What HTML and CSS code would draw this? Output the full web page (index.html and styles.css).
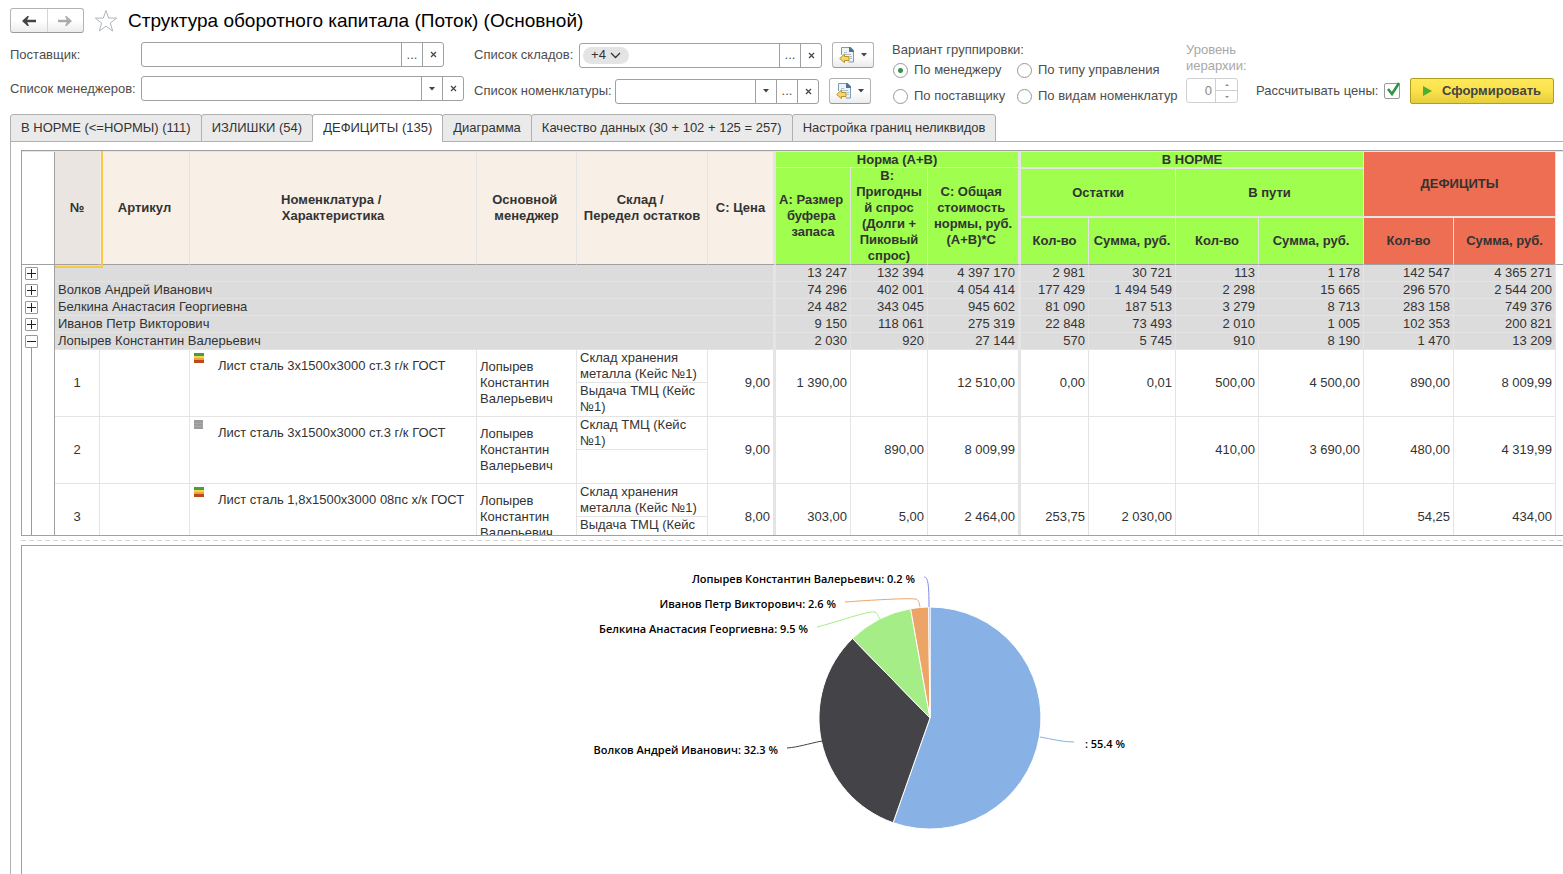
FILE: index.html
```html
<!DOCTYPE html>
<html lang="ru">
<head>
<meta charset="utf-8">
<title>Структура оборотного капитала</title>
<link rel="stylesheet" href="styles.css">
</head>
<body>
<svg class="sprite" aria-hidden="true">
  <symbol id="icon-load" viewBox="0 0 16 16">
    <path d="M3 1h8l3 3v11h-11z" fill="#eef3f8"/>
    <path d="M2.500 8V.5h8.500l3.500 3.500v11h-5" fill="none" stroke="#7f9ab5"/>
    <path d="M10 0h1.500l3.500 3.500v1.500h-5z" fill="#4f7296"/>
    <path d="M5 5.500h3M5 7.500h7M11 9.500h2M11 11.500h2" stroke="#a9bed2"/>
    <path d="M.7 11.500l4.800-4.500v2.500h4.500v4h-4.500v2.200z" fill="#f5d76a" stroke="#b8912b"/>
  </symbol>
  <symbol id="icon-cross" viewBox="0 0 7 7">
    <path d="M1 1l5 5M6 1l-5 5" stroke="#444" stroke-width="1.200"/>
  </symbol>
  <symbol id="icon-drop" viewBox="0 0 6 4">
    <path d="M0 0h6l-3 3.500z" fill="#444"/>
  </symbol>
  <symbol id="icon-plus" viewBox="0 0 11 11">
    <path d="M1 5.500h9M5.500 1v9" stroke="#222"/>
  </symbol>
  <symbol id="icon-minus" viewBox="0 0 11 11">
    <path d="M1 5.500h9" stroke="#222"/>
  </symbol>
  <symbol id="icon-stock" viewBox="0 0 12 12">
    <path d="M1 1h10v3h-10z" fill="#4e9a3d"/>
    <path d="M1 4h10v2h-10z" fill="#e8d94f"/>
    <path d="M1 6h10v2h-10z" fill="#f0a23c"/>
    <path d="M1 8h10v3h-10z" fill="#bb4a1c"/>
  </symbol>
  <symbol id="icon-none" viewBox="0 0 12 12">
    <path d="M1 1h9v9h-9z" fill="#9c9c9c"/>
    <path d="M1 4.500h9M1 7.500h9" stroke="#a9a9a9"/>
  </symbol>
</svg>

<header class="titlebar">
  <div class="history">
    <button type="button" aria-label="Назад"><svg width="14" height="10" viewBox="0 0 14 10"><path d="M0 5L5.500 0H7L5.200 3.700H14V6.300H5.200L7 10H5.500z" fill="#444"/></svg></button>
    <button type="button" aria-label="Вперед"><svg width="14" height="10" viewBox="0 0 14 10"><path d="M14 5L8.500 0H7L8.800 3.700H0V6.300H8.800L7 10H8.500z" fill="#ababab"/></svg></button>
  </div>
  <button class="star" type="button" aria-label="В избранное"><svg width="24" height="24" viewBox="0 0 24 24"><path d="M12 1.500l2.700 7.600h8l-6.400 4.900 2.400 8-6.700-4.800-6.700 4.800 2.400-8L1.300 9.100h8z" fill="#fff" stroke="#b0b4b9"/></svg></button>
  <h1>Структура оборотного капитала (Поток) (Основной)</h1>
</header>

<form class="filters" onsubmit="return false">
  <div class="filter-col col-left">
    <div class="row">
      <label class="cap-main" for="supplier">Поставщик:</label>
      <div class="field w-supplier">
        <input id="supplier" type="text">
        <button type="button" aria-label="Выбрать">...</button>
        <button type="button" aria-label="Очистить"><svg width="7" height="7"><use href="#icon-cross"/></svg></button>
      </div>
    </div>
    <div class="row">
      <label class="cap-main" for="managers">Список менеджеров:</label>
      <div class="field w-managers">
        <input id="managers" type="text">
        <button type="button" aria-label="Открыть список"><svg width="6" height="4"><use href="#icon-drop"/></svg></button>
        <button type="button" aria-label="Очистить"><svg width="7" height="7"><use href="#icon-cross"/></svg></button>
      </div>
    </div>
  </div>

  <div class="filter-col col-lists">
    <div class="row">
      <label class="cap-stores" for="stores">Список складов:</label>
      <div class="field w-stores">
        <button class="pill" type="button">+4 <svg width="11" height="7" viewBox="0 0 11 7"><path d="M1 1l4.500 4.500L10 1" fill="none" stroke="#333" stroke-width="1.300"/></svg></button>
        <input id="stores" type="text">
        <button type="button" aria-label="Выбрать">...</button>
        <button type="button" aria-label="Очистить"><svg width="7" height="7"><use href="#icon-cross"/></svg></button>
      </div>
      <button class="load" type="button" aria-label="Загрузить склады"><svg width="16" height="16"><use href="#icon-load"/></svg><svg width="6" height="4"><use href="#icon-drop"/></svg></button>
    </div>
    <div class="row">
      <label class="cap-items" for="items">Список номенклатуры:</label>
      <div class="field w-items">
        <input id="items" type="text">
        <button type="button" aria-label="Открыть список"><svg width="6" height="4"><use href="#icon-drop"/></svg></button>
        <button type="button" aria-label="Выбрать">...</button>
        <button type="button" aria-label="Очистить"><svg width="7" height="7"><use href="#icon-cross"/></svg></button>
      </div>
      <button class="load" type="button" aria-label="Загрузить номенклатуру"><svg width="16" height="16"><use href="#icon-load"/></svg><svg width="6" height="4"><use href="#icon-drop"/></svg></button>
    </div>
  </div>

  <div class="grouping" role="radiogroup" aria-labelledby="grouping-title">
    <div id="grouping-title" class="grouping-title">Вариант группировки:</div>
    <label><input type="radio" name="grouping" checked>По менеджеру</label>
    <label><input type="radio" name="grouping">По типу управления</label>
    <label><input type="radio" name="grouping">По поставщику</label>
    <label><input type="radio" name="grouping">По видам номенклатур</label>
  </div>

  <div class="level">
    <label for="level">Уровень иерархии:</label>
    <div class="spinner">
      <input id="level" type="text" value="0" disabled>
      <div class="steps">
        <button type="button" disabled aria-label="Больше"><svg width="4" height="2" viewBox="0 0 4 2"><path d="M0 2l2-2 2 2z" fill="#888"/></svg></button>
        <button type="button" disabled aria-label="Меньше"><svg width="4" height="2" viewBox="0 0 4 2"><path d="M0 0l2 2 2-2z" fill="#888"/></svg></button>
      </div>
    </div>
  </div>

  <div class="run">
    <label for="prices">Рассчитывать цены:</label>
    <span class="check">
      <input id="prices" type="checkbox" checked>
      <svg width="16" height="16" viewBox="0 0 16 16"><path d="M3 7l4 5 7-11" fill="none" stroke="#2f9446" stroke-width="2.600"/></svg>
    </span>
    <button class="primary" type="submit"><svg width="9" height="10" viewBox="0 0 9 10"><path d="M0 0l9 5-9 5z" fill="#4caf32"/></svg>Сформировать</button>
  </div>
</form>

<nav class="tabs" role="tablist">
  <button type="button" role="tab">В НОРМЕ (&lt;=НОРМЫ) (111)</button>
  <button type="button" role="tab">ИЗЛИШКИ (54)</button>
  <button type="button" role="tab" aria-selected="true">ДЕФИЦИТЫ (135)</button>
  <button type="button" role="tab">Диаграмма</button>
  <button type="button" role="tab">Качество данных (30 + 102 + 125 = 257)</button>
  <button type="button" role="tab">Настройка границ неликвидов</button>
</nav>

<main class="panel">
  <section class="sheet">
    <table>
      <colgroup>
        <col class="c-tree"><col class="c-num"><col class="c-art"><col class="c-name"><col class="c-man"><col class="c-store"><col class="c-price">
        <col class="c-a"><col class="c-b"><col class="c-c"><col class="c-q1"><col class="c-s1"><col class="c-q2"><col class="c-s2"><col class="c-q3"><col class="c-s3"><col>
      </colgroup>
      <thead>
        <tr class="h-top">
          <td class="tree" rowspan="3"></td>
          <th class="end selected" rowspan="3">№</th>
          <th class="end" rowspan="3">Артикул</th>
          <th class="end" rowspan="3">Номенклатура /&nbsp;<br>Характеристика</th>
          <th class="end" rowspan="3">Основной&nbsp;<br>менеджер</th>
          <th class="end" rowspan="3">Склад /&nbsp;<br>Передел остатков</th>
          <th class="end thick" rowspan="3">С: Цена</th>
          <th class="green thick band" colspan="3">Норма (A+B)</th>
          <th class="green band" colspan="4">В НОРМЕ</th>
          <th class="red" colspan="2" rowspan="2">ДЕФИЦИТЫ</th>
          <td class="end filler" rowspan="3"></td>
        </tr>
        <tr class="h-mid">
          <th class="green end" rowspan="2">А: Размер&nbsp;<br>буфера&nbsp;<br>запаса</th>
          <th class="green end" rowspan="2">В:&nbsp;<br>Пригодны<br>й спрос<br>(Долги +<br>Пиковый<br>спрос)</th>
          <th class="green end thick" rowspan="2">С: Общая&nbsp;<br>стоимость&nbsp;<br>нормы, руб.<br>(А+В)*С&nbsp;</th>
          <th class="green sub" colspan="2">Остатки</th>
          <th class="green sub" colspan="2">В пути</th>
        </tr>
        <tr class="h-low">
          <th class="green end sub">Кол-во</th>
          <th class="green end sub">Сумма, руб.</th>
          <th class="green end sub">Кол-во</th>
          <th class="green end sub">Сумма, руб.</th>
          <th class="red end sub">Кол-во</th>
          <th class="red end sub">Сумма, руб.</th>
        </tr>
      </thead>
      <tbody>
        <tr class="group"><td class="tree"><button type="button" aria-label="Развернуть"><svg width="11" height="11"><use href="#icon-plus"/></svg></button></td><td class="who thick" colspan="6"></td><td>13 247</td><td>132 394</td><td class="thick">4 397 170</td><td>2 981</td><td>30 721</td><td>113</td><td>1 178</td><td>142 547</td><td>4 365 271</td><td class="filler"></td></tr>
        <tr class="group"><td class="tree"><button type="button" aria-label="Развернуть"><svg width="11" height="11"><use href="#icon-plus"/></svg></button></td><td class="who thick" colspan="6">Волков Андрей Иванович</td><td>74 296</td><td>402 001</td><td class="thick">4 054 414</td><td>177 429</td><td>1 494 549</td><td>2 298</td><td>15 665</td><td>296 570</td><td>2 544 200</td><td class="filler"></td></tr>
        <tr class="group"><td class="tree"><button type="button" aria-label="Развернуть"><svg width="11" height="11"><use href="#icon-plus"/></svg></button></td><td class="who thick" colspan="6">Белкина Анастасия Георгиевна</td><td>24 482</td><td>343 045</td><td class="thick">945 602</td><td>81 090</td><td>187 513</td><td>3 279</td><td>8 713</td><td>283 158</td><td>749 376</td><td class="filler"></td></tr>
        <tr class="group"><td class="tree"><button type="button" aria-label="Развернуть"><svg width="11" height="11"><use href="#icon-plus"/></svg></button></td><td class="who thick" colspan="6">Иванов Петр Викторович</td><td>9 150</td><td>118 061</td><td class="thick">275 319</td><td>22 848</td><td>73 493</td><td>2 010</td><td>1 005</td><td>102 353</td><td>200 821</td><td class="filler"></td></tr>
        <tr class="group"><td class="tree branch-start"><button type="button" aria-label="Свернуть"><svg width="11" height="11"><use href="#icon-minus"/></svg></button></td><td class="who thick" colspan="6">Лопырев Константин Валерьевич</td><td>2 030</td><td>920</td><td class="thick">27 144</td><td>570</td><td>5 745</td><td>910</td><td>8 190</td><td>1 470</td><td>13 209</td><td class="filler"></td></tr>

        <tr class="item">
          <td class="tree branch" rowspan="2"></td>
          <td class="num" rowspan="2">1</td><td rowspan="2"></td>
          <td class="name" rowspan="2"><div><svg width="12" height="12"><use href="#icon-stock"/></svg><span>Лист сталь 3х1500х3000 ст.3 г/к ГОСТ</span></div></td>
          <td class="text" rowspan="2">Лопырев Константин Валерьевич</td>
          <td class="store">Склад хранения металла (Кейс №1)</td>
          <td class="thick" rowspan="2">9,00</td><td rowspan="2">1 390,00</td><td rowspan="2"></td><td class="thick" rowspan="2">12 510,00</td><td rowspan="2">0,00</td><td rowspan="2">0,01</td><td rowspan="2">500,00</td><td rowspan="2">4 500,00</td><td rowspan="2">890,00</td><td rowspan="2">8 009,99</td><td class="filler" rowspan="2"></td>
        </tr>
        <tr class="item-low"><td class="store">Выдача ТМЦ (Кейс №1)</td></tr>
        <tr class="item">
          <td class="tree branch" rowspan="2"></td>
          <td class="num" rowspan="2">2</td><td rowspan="2"></td>
          <td class="name" rowspan="2"><div><svg width="12" height="12"><use href="#icon-none"/></svg><span>Лист сталь 3х1500х3000 ст.3 г/к ГОСТ</span></div></td>
          <td class="text" rowspan="2">Лопырев Константин Валерьевич</td>
          <td class="store">Склад ТМЦ (Кейс №1)</td>
          <td class="thick" rowspan="2">9,00</td><td rowspan="2"></td><td rowspan="2">890,00</td><td class="thick" rowspan="2">8 009,99</td><td rowspan="2"></td><td rowspan="2"></td><td rowspan="2">410,00</td><td rowspan="2">3 690,00</td><td rowspan="2">480,00</td><td rowspan="2">4 319,99</td><td class="filler" rowspan="2"></td>
        </tr>
        <tr class="item-low"><td class="store"></td></tr>
        <tr class="item">
          <td class="tree branch" rowspan="2"></td>
          <td class="num" rowspan="2">3</td><td rowspan="2"></td>
          <td class="name" rowspan="2"><div><svg width="12" height="12"><use href="#icon-stock"/></svg><span>Лист сталь 1,8х1500х3000 08пс х/к ГОСТ</span></div></td>
          <td class="text" rowspan="2">Лопырев Константин Валерьевич</td>
          <td class="store">Склад хранения металла (Кейс №1)</td>
          <td class="thick" rowspan="2">8,00</td><td rowspan="2">303,00</td><td rowspan="2">5,00</td><td class="thick" rowspan="2">2 464,00</td><td rowspan="2">253,75</td><td rowspan="2">2 030,00</td><td rowspan="2"></td><td rowspan="2"></td><td rowspan="2">54,25</td><td rowspan="2">434,00</td><td class="filler" rowspan="2"></td>
        </tr>
        <tr class="item-low"><td class="store">Выдача ТМЦ (Кейс</td></tr>
      </tbody>
    </table>
  </section>
  <div class="splitter"></div>
  <section class="chart">
    <svg viewBox="0 0 1541 328" role="img" aria-label="Доли менеджеров">
      <g stroke="#fff" stroke-linejoin="round">
        <path d="M908 172V61A111 111 0 1 1 871.100 276.700z" fill="#88b2e6"/>
        <path d="M908 172L871.100 276.700A111 111 0 0 1 830.500 92.500z" fill="#434348"/>
        <path d="M908 172L830.500 92.500A111 111 0 0 1 888.600 62.700z" fill="#a5ed86"/>
        <path d="M908 172L888.600 62.700A111 111 0 0 1 906.600 61z" fill="#eda567"/>
        <path d="M908 172L906.600 61A111 111 0 0 1 908 61z" fill="#8085e9"/>
      </g>
      <g fill="none">
        <path d="M902 31C906 31 907 38 907 61" stroke="#8085e9"/>
        <path d="M823 56C850 54 885 52 893 53C897 53 897 57 898 61" stroke="#eda567"/>
        <path d="M795 81C815 76 845 65 852 66C855 66 856 70 858 73" stroke="#a5ed86"/>
        <path d="M765 202C777 201 785 198 800 195" stroke="#434348"/>
        <path d="M1018 191C1030 193 1040 196 1052 196" stroke="#88b2e6"/>
      </g>
      <g class="labels">
        <text x="893" y="37">Лопырев Константин Валерьевич: 0.2 %</text>
        <text x="814" y="62">Иванов Петр Викторович: 2.6 %</text>
        <text x="786" y="87">Белкина Анастасия Георгиевна: 9.5 %</text>
        <text x="756" y="208">Волков Андрей Иванович: 32.3 %</text>
        <text x="1103" y="202">: 55.4 %</text>
      </g>
    </svg>
  </section>
</main>
</body>
</html>
```
FILE: styles.css
```css
* { box-sizing: border-box; }

body {
  margin: 0;
  height: 100vh;
  display: flex;
  flex-direction: column;
  overflow: hidden;
  background: #fff;
  color: #333;
  font: 13px/16px "Liberation Sans", Arial, sans-serif;
}

button, input {
  font: inherit;
  color: inherit;
  margin: 0;
  padding: 0;
  border: 0;
  background: none;
  outline: 0;
}

.sprite { display: none; }

/* Title */
.titlebar {
  display: flex;
  align-items: center;
  gap: 10px;
  padding: 8px 10px 0;
  height: 33px;
}

.history {
  display: flex;
  width: 74px;
  height: 25px;
  border: 1px solid #b3b3b3;
  border-bottom-color: #999;
  border-radius: 3px;
  background: linear-gradient(#fff 50%, #ececec);
}

.history button {
  flex: 1;
  display: flex;
  align-items: center;
  justify-content: center;
}

.history button + button { border-left: 1px solid #d4d4d4; }

.star { width: 24px; height: 24px; }

.star svg, .load svg, .field svg, .history svg { display: block; }

h1 {
  margin: 0;
  font-size: 19px;
  line-height: 24px;
  font-weight: 400;
  color: #000;
}

/* Filters */
.filters {
  display: grid;
  grid-template-columns: 454px 408px 284px 60px auto;
  justify-content: start;
  gap: 10px;
  padding: 9px 9px 10px 10px;
  color: #4d4d4d;
}

.filter-col { display: flex; flex-direction: column; }
.col-left { gap: 9px; }
.col-lists { gap: 10px; }

.row { display: flex; align-items: center; }
.cap-main { width: 131px; white-space: nowrap; }
.cap-stores { width: 105px; white-space: nowrap; }
.cap-items { width: 141px; white-space: nowrap; }

.field {
  display: flex;
  height: 25px;
  border: 1px solid #a0a0a0;
  border-radius: 3px;
  background: #fff;
}

.w-supplier { width: 303px; }
.w-managers { width: 323px; }
.w-stores { width: 243px; }
.w-items { width: 204px; }

.field input { flex: 1; min-width: 0; padding: 0 4px; }

.field > button {
  flex: none;
  width: 21px;
  border-left: 1px solid #a0a0a0;
  display: flex;
  align-items: center;
  justify-content: center;
}

.field > .pill {
  width: 46px;
  height: 17px;
  margin: 3px;
  gap: 4px;
  border: 0;
  border-radius: 9px;
  background: #e4e4e4;
  color: #333;
}

.load {
  width: 42px;
  height: 26px;
  margin-left: 10px;
  display: flex;
  align-items: center;
  justify-content: center;
  gap: 6px;
  border: 1px solid #b3b3b3;
  border-bottom-color: #999;
  border-radius: 3px;
  background: linear-gradient(#fff 50%, #ececec);
}

.grouping {
  display: grid;
  grid-template-columns: 124px auto;
  align-content: start;
  row-gap: 10px;
}

.grouping-title { grid-column: 1 / -1; margin-bottom: -6px; }

.grouping label {
  display: flex;
  align-items: center;
  gap: 6px;
  white-space: nowrap;
}

.grouping input {
  appearance: none;
  flex: none;
  width: 15px;
  height: 15px;
  margin-left: 1px;
  border: 1px solid #999;
  border-radius: 50%;
}

.grouping input:checked { background: radial-gradient(circle, #2f9446 2px, #fff 3px); }

.level {
  display: flex;
  flex-direction: column;
  gap: 4px;
  color: #a8a8a8;
}

.spinner {
  display: flex;
  width: 52px;
  height: 25px;
  border: 1px solid #d0d0d0;
  border-radius: 3px;
}

.spinner input {
  flex: 1;
  min-width: 0;
  padding-right: 3px;
  text-align: right;
  color: #888;
}

.steps {
  display: flex;
  flex-direction: column;
  width: 22px;
  border-left: 1px solid #d0d0d0;
}

.steps button {
  flex: 1;
  display: flex;
  align-items: center;
  justify-content: center;
}

.steps button + button { border-top: 1px solid #d0d0d0; }

.run {
  display: flex;
  align-items: center;
  align-self: end;
  height: 26px;
}

.run label { width: 128px; white-space: nowrap; }

.check { position: relative; display: flex; }

.check input {
  appearance: none;
  width: 16px;
  height: 16px;
  border: 1px solid #999;
  border-radius: 2px;
}

.check svg { position: absolute; left: 1px; top: -1px; pointer-events: none; }

.primary {
  display: flex;
  align-items: center;
  justify-content: center;
  gap: 10px;
  width: 144px;
  height: 26px;
  margin-left: 10px;
  border: 1px solid #b39d1f;
  border-radius: 2px;
  background: linear-gradient(#ffe95c, #fbe14a 50%, #e5cd3c);
  color: #444;
  font-weight: 700;
}

/* Tabs */
.tabs {
  display: flex;
  height: 28px;
  margin-left: 10px;
  box-shadow: inset 0 -1px #b0b0b0;
}

.tabs button {
  padding: 0 10px;
  border: 1px solid #b0b0b0;
  border-radius: 3px 3px 0 0;
  background: #eaeaea;
  white-space: nowrap;
}

.tabs button + button { margin-left: -1px; }
.tabs [aria-selected="true"] { background: #fff; border-bottom-color: #fff; }

/* Content */
.panel {
  flex: 1;
  min-height: 0;
  display: flex;
  flex-direction: column;
  margin-left: 10px;
  padding: 8px 0 0 10px;
  border-left: 1px solid #b0b0b0;
}

.sheet {
  flex: none;
  height: 386px;
  overflow: hidden;
  border: 1px solid #a0a0a0;
  border-right: 0;
}

.splitter {
  flex: none;
  height: 9px;
  background: repeating-linear-gradient(90deg, #d4d4d4 0 5px, #fff 5px 8px) 0 4px / 100% 1px no-repeat;
}

.chart {
  flex: 1;
  min-height: 0;
  border: 1px solid #a0a0a0;
  border-width: 1px 0 0 1px;
}

.chart svg { display: block; width: 100%; height: 100%; }

.labels {
  font: 600 11px "Open Sans", "Noto Sans", sans-serif;
  fill: #000;
  text-anchor: end;
}

/* Table */
table {
  width: 100%;
  min-width: 1534px;
  table-layout: fixed;
  border-collapse: separate;
  border-spacing: 0;
  border-top: 1px solid #e4e4e4;
}

.c-tree { width: 33px; }
.c-num { width: 45px; }
.c-art { width: 90px; }
.c-name { width: 287px; }
.c-man { width: 100px; }
.c-store { width: 131px; }
.c-price { width: 68px; }
.c-a { width: 75px; }
.c-b { width: 77px; }
.c-c { width: 93px; }
.c-q1 { width: 68px; }
.c-s1 { width: 87px; }
.c-q2 { width: 83px; }
.c-s2 { width: 105px; }
.c-q3 { width: 90px; }
.c-s3 { width: 102px; }

th, td {
  padding: 0 3px;
  border: 0 solid #e4e4e4;
  border-width: 0 1px 1px 0;
}

th {
  padding: 0;
  background: #f8efe6;
  text-align: center;
  vertical-align: middle;
  white-space: nowrap;
}

.green { background: #a0fe4e; }
.red { background: #ed6e52; }
.thick { border-right-width: 3px; }
.sub { border-top-width: 1px; }
.end { border-bottom-color: #a0a0a0; }
.band { line-height: 15px; }

.h-top { height: 16px; }
.h-mid { height: 49px; }
.h-low { height: 48px; }

.selected { position: relative; background: #ebe5e1; }

.selected::after {
  content: "";
  position: absolute;
  inset: -1px -4px -4px 0;
  border: 0 solid #f5c945;
  border-width: 0 2px 2px 0;
}

td { text-align: right; vertical-align: middle; }

.group { height: 17px; }
.group td { background-color: #dcdcdc; }
.group .who { text-align: left; }

tbody .tree, .tree {
  padding: 0;
  border-right-color: #a0a0a0;
  border-bottom-width: 0;
  text-align: left;
}

thead .tree { border-bottom: 1px solid #a0a0a0; }

.group .tree { background-color: #fff; }

.tree button {
  display: block;
  width: 13px;
  height: 13px;
  margin-left: 3px;
  border: 1px solid #999;
  border-radius: 1px;
}

.tree svg { display: block; }

.branch, .group .branch-start {
  background-image: linear-gradient(#999, #999);
  background-repeat: no-repeat;
  background-size: 1px 100%;
  background-position: 9px 0;
}

.group .branch-start { background-size: 1px 3px; background-position: 9px 100%; }

.group .filler, .filler { background: #fff; border-width: 0; }
thead .filler { border-bottom-width: 1px; }

.item { height: 33px; }
.item-low { height: 34px; }
.num { text-align: center; }
.text { text-align: left; }

.store {
  height: 33px;
  text-align: left;
  vertical-align: top;
}

.name { text-align: left; vertical-align: top; }
.name div { display: flex; gap: 13px; padding-top: 2px; }
.name svg { flex: none; }
.name span { padding-top: 6px; }
```
